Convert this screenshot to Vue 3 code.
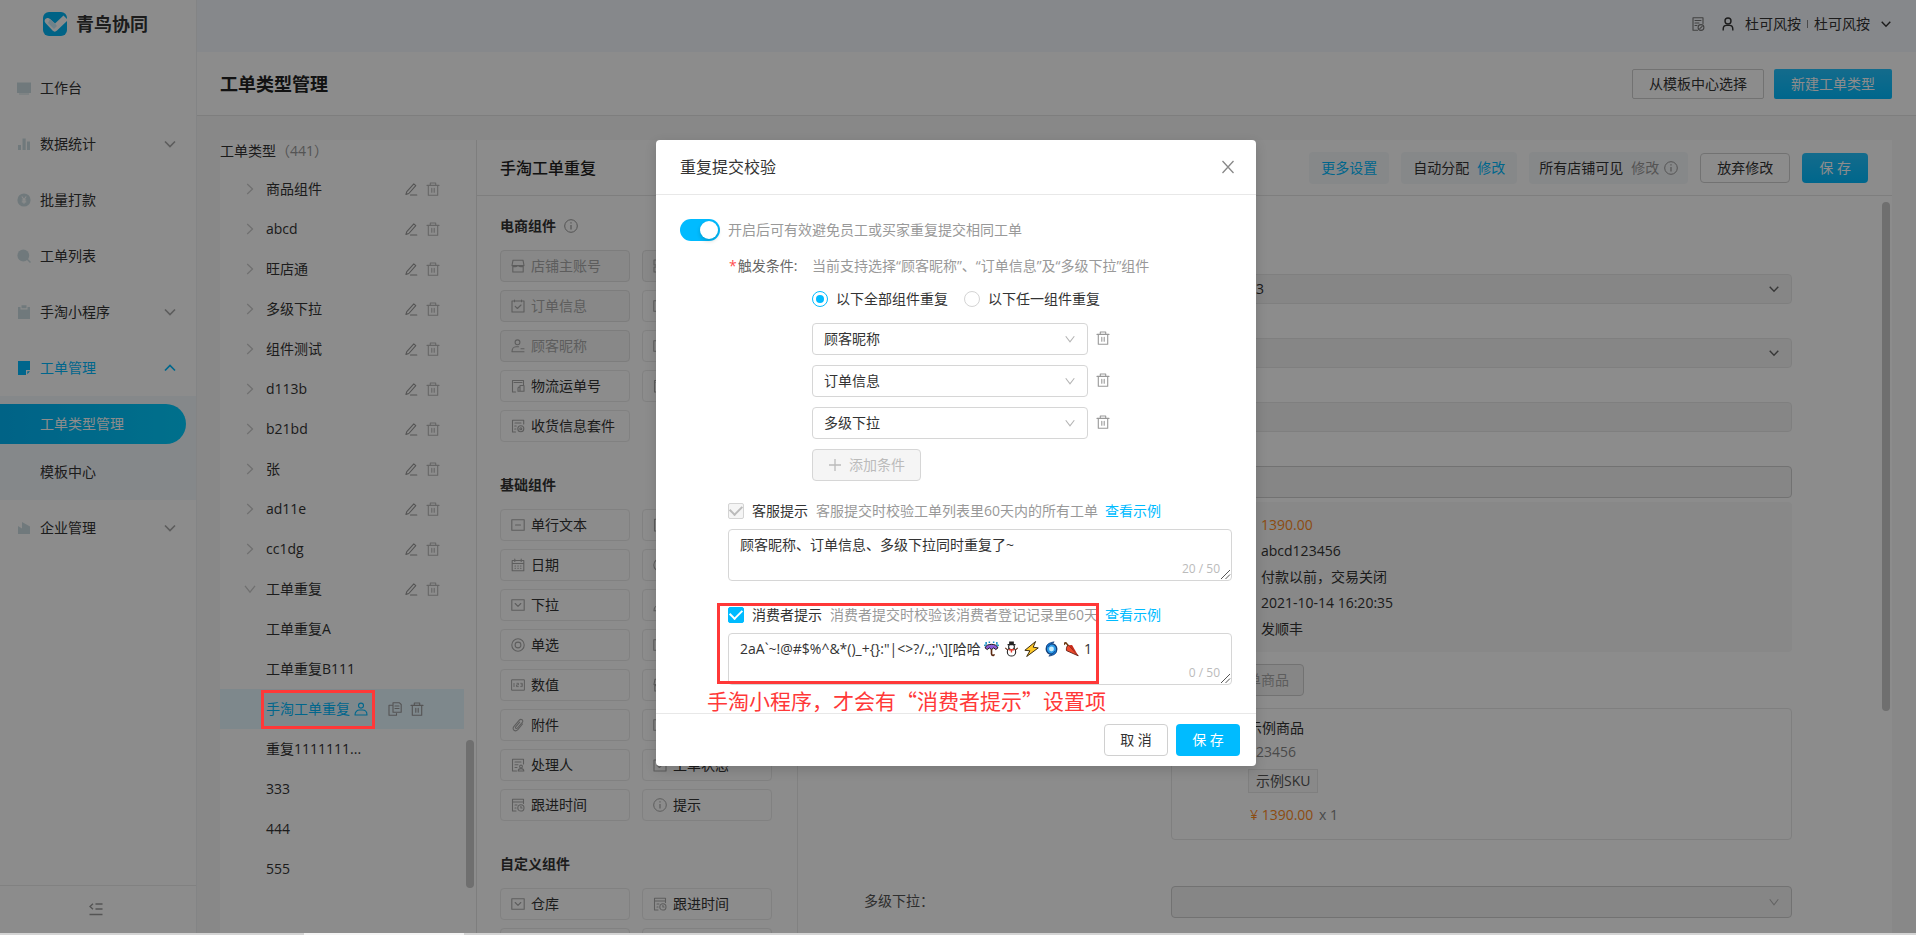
<script setup>
import { h, ref } from 'vue'

const S = 'fill="none" stroke="currentColor" stroke-width="1.1" stroke-linecap="round" stroke-linejoin="round"'
const glyphs = {
  desk: '<path fill="currentColor" d="M0 1.5h14v10.500H0zM2 12.500h10v1H2z"/>',
  chart: '<path fill="currentColor" d="M1 8h3v5H1zM5.500 1.500h3.200V13H5.500zM10 4.500h3V13h-3z"/>',
  yen: '<circle cx="7" cy="7" r="6.600" fill="currentColor"/><path d="M4.800 3.500L7 6.500l2.200-3M4.800 7h4.400M4.800 8.900h4.400M7 6.500v4.300" fill="none" stroke="#fff" stroke-width="1.100"/>',
  search: '<circle cx="6.300" cy="6.500" r="5.900" fill="currentColor"/><path d="M10 10l3.500 3.500" stroke="currentColor" stroke-width="1.500"/>',
  clip: '<path fill="currentColor" d="M1 2h2.500v2.500h7V2H13v12H1zM4.500.200h5V3.300h-5z"/>',
  note: '<path fill="currentColor" d="M1 0h12v9H9v5H1zM10.300 10.200H13L10.300 13.300z"/>',
  factory: '<path fill="currentColor" d="M1 5l4 2.600V1l8 4.500V13H1z"/>',
  down: '<path d="M2 4.500l5 5 5-5" fill="none" stroke="currentColor" stroke-width="1.700"/>',
  up: '<path d="M2 9.500l5-5 5 5" fill="none" stroke="currentColor" stroke-width="1.700"/>',
  thindown: '<path d="M2 3.800l5 6.400 5-6.400" fill="none" stroke="currentColor" stroke-width="1.300"/>',
  right: '<path d="M4.200 2l5.300 5-5.300 5" fill="none" stroke="currentColor" stroke-width="1.300"/>',
  edit: `<path ${S} d="M2.800 9.600L9.800 1.800l2 1.900-7 7.800-2.900.900zM6.500 13h6.300"/>`,
  trash: `<path ${S} d="M1 3.400h12M2.300 3.400v9.800h9.400V3.400M4.300 3V1h5.400v2M5.800 6.300v4M8.200 6.300v4"/>`,
  copy: `<path ${S} d="M5 .8h6.500l1.700 1.700v7.800H5zM4 3.200H1v10h7.500v-1.700M7 4h4M7 6.500h4"/>`,
  person: `<circle cx="7" cy="3.600" r="2.500" ${S}/><path ${S} d="M1 13c0-3.200 2-5 4.500-5h3C11 8 13 9.800 13 13z"/>`,
  user: '<circle cx="7" cy="4" r="3" fill="none" stroke="currentColor" stroke-width="1.400"/><path d="M2.200 13.500V12c0-2.200 1.500-3.600 3.300-3.600h3c1.800 0 3.300 1.400 3.300 3.600v1.500" fill="none" stroke="currentColor" stroke-width="1.400"/>',
  bill: `<path ${S} d="M12 6.500V.8H2v12.500h4.500M4 3.500h6M4 6h4M4 8.500h2"/><circle cx="10" cy="10.500" r="2.900" ${S}/><path ${S} d="M8.800 11.600l2.400-2.200"/>`,
  info: '<circle cx="7" cy="7" r="6.300" fill="none" stroke="currentColor"/><path d="M7 6v4.500M7 3.300v1.300" stroke="currentColor" stroke-width="1.200"/>',
  shop: `<path ${S} d="M2 1.200h10l1 5.300H1zM1.800 7v6h10.400V7M1 6.500c2 1.500 4 1.500 6 0 2 1.500 4 1.500 6 0"/>`,
  order: `<path ${S} d="M1 2h12v11H1zM3.500 1v1.800M10.500 1v1.800M4.200 7.300l2.200 2.200 3.600-3.500"/>`,
  member: `<circle cx="6.500" cy="3.300" r="2.400" ${S}/><path ${S} d="M9 12.800H1c0-3 1.800-5 4-5h2.500M10 9.800h3M9 12.800h4"/>`,
  truck: `<path ${S} d="M4.500 13H1.500V1.500h11V6M3 3.500h8M7 12.200V9.300c0-.8 1-1.600 2-1.600V12.200zM9 6.500h4v5.700H9z"/>`,
  set: `<path ${S} d="M4.500 13H1.500V1.200h11.200V5M4 4h6M3.700 7h1.500M3.700 10h1.200"/><circle cx="9.800" cy="9.800" r="3" ${S}/><circle cx="9.800" cy="9.800" r="1" ${S}/>`,
  text: `<path ${S} d="M.8 1.800h12.400v10.400H.8zM4.500 7h5"/>`,
  date: `<path ${S} d="M1.200 2.500h11.600v10.300H1.200zM1.200 5.500h11.600M3.800 1v2.500M10.200 1v2.500M4 8h.5M6.800 8h.5M9.500 8h.5M4 10.300h.5M6.800 10.300h.5M9.500 10.300h.5"/>`,
  drop: `<path ${S} d="M.8 1.800h12.400v10.400H.8zM4.200 5.500L7 8.300l2.800-2.800"/>`,
  radio: `<circle cx="7" cy="7" r="6.200" ${S}/><circle cx="7" cy="7" r="2.900" ${S}/>`,
  num: '<path d="M.6 1.800h12.800v10.400H.6z" fill="none" stroke="currentColor"/><path d="M3 5v4M5.500 5.300h2v1.600h-2v1.700h2.200M9.300 5.300h2v3.300h-2M9.800 6.900h1.500" fill="none" stroke="currentColor" stroke-width=".9"/>',
  attach: `<path ${S} d="M11.500 6L6.800 11.600c-2.500 2.800-6.200 0-4-2.900l5.500-6.500c1.800-2 4.600.2 3 2.200L6.400 10c-1 1.100-2.600 0-1.700-1.200l4-4.600"/>`,
  handler: `<path ${S} d="M5.500 13H1.500V1.200h11V6M4 4h6M4 6.800h3M4 9.500h2"/><circle cx="10" cy="8.500" r="1.400" ${S}/><path ${S} d="M7.200 13c0-1.600 1-2.400 2.800-2.400s2.800.8 2.800 2.400z"/>`,
  follow: `<path ${S} d="M5 13H1.500V1.200h11V5.500M1.500 4h11M4 7h2M4 10h1"/><circle cx="9.900" cy="9.900" r="3.100" ${S}/><path ${S} d="M9.900 8.300V10h1.200"/>`,
  grid: `<path ${S} d="M1 1h5v5H1zM8 1h5v5H8zM1 8h5v5H1zM8 8h5v5H8z"/>`,
  fold: '<path d="M6.500 2h7M6.500 7h7M.5 12.500h13M4 1.800L1 4.500l3 2.700" fill="none" stroke="currentColor" stroke-width="1.400"/>',
  close: '<path d="M1.500 1l11 12M12.500 1l-11 12" fill="none" stroke="currentColor" stroke-width="1.300"/>',
  plus: '<path d="M7 1v12M1 7h12" stroke="currentColor" stroke-width="1.300"/>',
  grip: '<path d="M4 13l9-9M8.500 13L13 8.500" stroke="currentColor" stroke-width="1" fill="none"/>',
  umbrella: '<path d="M1 6c1-4.500 11-4.500 12 0l-2 1.500L9 6 7 7.500 5 6 3 7.500z" fill="#8a5fd6" stroke="#111" stroke-width=".9"/><path d="M7 7v4.500c0 2 2.500 1.800 2.500.3" fill="none" stroke="#5b2a12" stroke-width="1.500"/><path d="M2 .5v2.600M.3 3.200l1.200 1M12 .5v2.600M13.700 3.200l-1.200 1M5 0v1.500M9 0v1.500" stroke="#138fc4" stroke-width="1.400"/>',
  snowman: '<circle cx="7" cy="9.700" r="3.900" fill="#fff" stroke="#222"/><circle cx="7" cy="5" r="2.700" fill="#fff" stroke="#222"/><path d="M4.800 0h4.400v2.700H4.800zM3.300 2.300h7.400v1.200H3.300z" fill="#222"/><path d="M4.500 7.100h5v1.200H7.600v2H6.300v-2H4.500z" fill="#e23a2e"/><path d="M1.200 6l2.300 2M12.800 6l-2.300 2" stroke="#5b2a12"/>',
  bolt: '<path d="M10.800 0L.8 8.200l4.700.5L2.500 14 13.300 6 8.600 5.300z" fill="#ffc928" stroke="#33240a" stroke-width=".9"/>',
  cyclone: '<circle cx="7" cy="7" r="4.900" fill="#2d9be8" stroke="#123d78" stroke-width="1.300"/><circle cx="7" cy="7" r="2.300" fill="#c9efff"/><path d="M2.300 6C2 3 4.500 1 9.500.4 7 2 5 3 4 5M11.700 8c.3 3-2.200 5-7.200 5.600C7 12 9 11 10 9" fill="#1574cf" stroke="#123d78" stroke-width=".7"/>',
  closed: '<path d="M4 3.200l9.300 10.200L2.300 8.500C2 6 2.500 4.500 4 3.200z" fill="#ef4a2d" stroke="#56150c" stroke-width=".8"/><path d="M4.200 3.500l3.300-.3 5.800 10z" fill="#c82a1a"/><path d="M4 4L2.500 2C1.500.500-.2 1.500.700 3" fill="none" stroke="#6b3a13" stroke-width="1.500"/>'
}
const Icon = (props) => h('svg', { viewBox: '0 0 14 14', 'aria-hidden': 'true', innerHTML: glyphs[props.name] })
Icon.props = ['name']

const menuTop = [
  { icon: 'desk', label: '工作台' },
  { icon: 'chart', label: '数据统计', arrow: 'down' },
  { icon: 'yen', label: '批量打款' },
  { icon: 'search', label: '工单列表' },
  { icon: 'clip', label: '手淘小程序', arrow: 'down' },
  { icon: 'note', label: '工单管理', arrow: 'up', active: true }
]
const groups = ['商品组件', 'abcd', '旺店通', '多级下拉', '组件测试', 'd113b', 'b21bd', '张', 'ad11e', 'cc1dg', '工单重复']
const children = ['工单重复A', '工单重复B111', '手淘工单重复', '重复1111111...', '333', '444', '555']

const sections = [
  { title: '电商组件', info: true, items: [
    { icon: 'shop', label: '店铺主账号', off: true }, { icon: 'grid', off: true },
    { icon: 'order', label: '订单信息', off: true }, { icon: 'text' },
    { icon: 'member', label: '顾客昵称', off: true }, { icon: 'text' },
    { icon: 'truck', label: '物流运单号' }, { icon: 'truck' },
    { icon: 'set', label: '收货信息套件' }
  ] },
  { title: '基础组件', items: [
    { icon: 'text', label: '单行文本' }, { icon: 'handler' },
    { icon: 'date', label: '日期' }, { icon: 'radio' },
    { icon: 'drop', label: '下拉' }, { icon: 'member' },
    { icon: 'radio', label: '单选' }, { icon: 'drop' },
    { icon: 'num', label: '数值' }, { icon: 'shop' },
    { icon: 'attach', label: '附件' }, { icon: 'text' },
    { icon: 'handler', label: '处理人' }, { icon: 'order', label: '工单状态' },
    { icon: 'follow', label: '跟进时间' }, { icon: 'info', label: '提示' }
  ] },
  { title: '自定义组件', items: [
    { icon: 'drop', label: '仓库' }, { icon: 'follow', label: '跟进时间' },
    { icon: 'text' }, { icon: 'text' }
  ] }
]

const conditions = ['顾客昵称', '订单信息', '多级下拉']
const enabled = ref(true)
const mode = ref('all')
const staffOn = ref(true)
const buyerOn = ref(true)
const staffTip = ref('顾客昵称、订单信息、多级下拉同时重复了~')
const buyerTip = ref('2aA`~!@#$%^&*()_+{}:"|<>?/.,;\'\\][哈哈')
const emoji = ['umbrella', 'snowman', 'bolt', 'cyclone', 'closed']
</script>

<template>
  <div class="screen">
    <div class="app">
      <aside class="sidebar">
        <div class="brand">
          <svg class="logo" viewBox="0 0 24 24" aria-hidden="true">
            <rect width="24" height="24" rx="6" fill="#00b4f5" />
            <path d="M2 7.500C3.500 5.500 5.500 5.500 7 7l5 4.500L20.500 3.500 24 7v2L14 18.500c-1.500 1.500-3 1.500-4.500 0L2.500 11C1.500 9.800 1.300 8.700 2 7.500z" fill="#fff" />
            <path d="M7 7l5 4.500 2 2.500-3 3-6-6z" fill="#c9edfb" />
          </svg>
          <strong>青鸟协同</strong>
        </div>
        <nav>
          <a v-for="m in menuTop" :key="m.label" href="#" class="menu" :class="{ on: m.active }">
            <Icon class="i14 menu-icon" :name="m.icon" />
            <span>{{ m.label }}</span>
            <Icon v-if="m.arrow" class="i14 arrow" :name="m.arrow" />
          </a>
          <div class="submenu">
            <a href="#" class="pill">工单类型管理</a>
            <a href="#" class="sub">模板中心</a>
          </div>
          <a href="#" class="menu">
            <Icon class="i14 menu-icon" name="factory" />
            <span>企业管理</span>
            <Icon class="i14 arrow" name="down" />
          </a>
        </nav>
        <button class="fold" aria-label="收起菜单"><Icon class="i14" name="fold" /></button>
      </aside>

      <div class="main">
        <header class="topbar">
          <Icon class="i14 bill" name="bill" />
          <Icon class="i14" name="user" />
          <span class="who">杜可风按</span><i class="bar"></i><span class="who">杜可风按</span>
          <Icon class="i12 who-arrow" name="down" />
        </header>
        <div class="titlebar">
          <h1>工单类型管理</h1>
          <button class="btn square">从模板中心选择</button>
          <button class="btn primary square">新建工单类型</button>
        </div>

        <div class="workspace">
          <section class="tree">
            <div class="tree-title">工单类型<span>（441）</span></div>
            <ul>
              <li v-for="(g, i) in groups" :key="g">
                <Icon class="i14 caret" :name="i === 10 ? 'thindown' : 'right'" />
                <span class="node">{{ g }}</span>
                <span class="tools">
                  <Icon class="i14" name="edit" />
                  <Icon class="i14 pale" name="trash" />
                </span>
              </li>
              <li v-for="c in children" :key="c" class="child" :class="{ picked: c === '手淘工单重复' }">
                <span class="node">{{ c }}</span>
                <template v-if="c === '手淘工单重复'">
                  <Icon class="i14 owner" name="person" />
                  <span class="row-tools">
                    <Icon class="i14" name="copy" />
                    <Icon class="i14" name="trash" />
                  </span>
                  <i class="mark"></i>
                </template>
              </li>
            </ul>
            <i class="thumb"></i>
          </section>

          <section class="parts">
            <h2>手淘工单重复</h2>
            <div class="parts-body">
              <div v-for="s in sections" :key="s.title" class="group">
                <h3>{{ s.title }}<Icon v-if="s.info" class="i14" name="info" /></h3>
                <div class="pair">
                  <button v-for="(p, i) in s.items" :key="i" class="part" :disabled="p.off">
                    <Icon class="i14" :name="p.icon" />
                    <span>{{ p.label }}</span>
                  </button>
                </div>
              </div>
            </div>
          </section>

          <section class="preview">
            <div class="actions">
              <a href="#" class="chip link">更多设置</a>
              <span class="chip">自动分配<a href="#" class="link">修改</a></span>
              <span class="chip wide">所有店铺可见<a href="#" class="dim">修改</a><Icon class="i14" name="info" /></span>
              <button class="btn">放弃修改</button>
              <button class="btn primary save">保 存</button>
            </div>
            <div class="form">
              <div class="field">
                <span class="sel">
                  <select disabled aria-label="工单类型" class="indent"><option>3</option></select>
                  <Icon class="i12 dark" name="down" />
                </span>
              </div>
              <div class="field">
                <span class="sel">
                  <select disabled aria-label="店铺"><option></option></select>
                  <Icon class="i12 dark" name="down" />
                </span>
              </div>
              <div class="field"><input disabled aria-label="顾客昵称" /></div>
              <div class="field last"><input disabled class="strong" aria-label="订单号" /></div>
              <div class="order">
                <p class="orange">1390.00</p>
                <p>abcd123456</p>
                <p>付款以前，交易关闭</p>
                <p>2021-10-14 16:20:35</p>
                <p>发顺丰</p>
              </div>
              <button class="pick" disabled>选择订单商品</button>
              <div class="goods">
                <div>示例商品</div>
                <div class="code">123456</div>
                <span class="sku">示例SKU</span>
                <div class="price"><span class="orange">¥ 1390.00</span> x 1</div>
              </div>
              <label class="label" for="multi">多级下拉：</label>
              <span class="sel multi">
                <select id="multi" disabled class="strong"><option></option></select>
                <Icon class="i12" name="thindown" />
              </span>
            </div>
            <i class="thumb right"></i>
          </section>
        </div>
      </div>

      <div class="mask">
        <div class="dialog" role="dialog" aria-labelledby="dlg-title">
          <header class="dlg-head">
            <span id="dlg-title">重复提交校验</span>
            <button class="x" aria-label="关闭"><Icon class="i14" name="close" /></button>
          </header>
          <div class="dlg-body">
            <label class="toggle">
              <input v-model="enabled" type="checkbox" role="switch" class="switch" />
              <span>开启后可有效避免员工或买家重复提交相同工单</span>
            </label>
            <div class="cond">
              <div class="req"><b>*</b>触发条件:</div>
              <div>
                <div class="hint">当前支持选择“顾客昵称”、“订单信息”及“多级下拉”组件</div>
                <div class="radios">
                  <label><input v-model="mode" type="radio" value="all" name="mode" />以下全部组件重复</label>
                  <label><input v-model="mode" type="radio" value="any" name="mode" />以下任一组件重复</label>
                </div>
                <div v-for="c in conditions" :key="c" class="cond-row">
                  <span class="sel">
                    <select :aria-label="c"><option>{{ c }}</option></select>
                    <Icon class="i12" name="thindown" />
                  </span>
                  <button class="del" :aria-label="'删除' + c"><Icon class="i14" name="trash" /></button>
                </div>
                <button class="add" disabled><Icon class="i14" name="plus" />添加条件</button>
              </div>
            </div>
            <div class="tip">
              <div class="tip-head">
                <div class="lead">
                  <label><input v-model="staffOn" type="checkbox" class="check" disabled />客服提示</label>
                  <span class="desc">客服提交时校验工单列表里60天内的所有工单</span>
                </div>
                <a href="#" class="link">查看示例</a>
              </div>
              <div class="area">
                <textarea v-model="staffTip" aria-label="客服提示内容"></textarea>
                <span class="count">20 / 50</span>
                <Icon class="i14 grip" name="grip" />
              </div>
            </div>
            <div class="tip">
              <div class="tip-head">
                <div class="lead">
                  <label><input v-model="buyerOn" type="checkbox" class="check" />消费者提示</label>
                  <span class="desc">消费者提交时校验该消费者登记记录里60天</span>
                </div>
                <a href="#" class="link">查看示例</a>
              </div>
              <div class="area">
                <div class="line">
                  <textarea v-model="buyerTip" class="short" aria-label="消费者提示内容"></textarea>
                  <span class="emoji"><Icon v-for="e in emoji" :key="e" class="glyph" :name="e" />1</span>
                </div>
                <span class="count">0 / 50</span>
                <Icon class="i14 grip" name="grip" />
              </div>
            </div>
            <i class="frame"></i>
            <div class="remark">手淘小程序，才会有“消费者提示”设置项</div>
          </div>
          <footer class="dlg-foot">
            <button class="btn tall">取 消</button>
            <button class="btn tall flat">保 存</button>
          </footer>
        </div>
      </div>
    </div>
    <div class="hscroll"><i></i></div>
  </div>
</template>

<style>
body { margin: 0; overflow: hidden; }
</style>

<style scoped>
* { box-sizing: border-box; }
.screen {
  display: flex; flex-direction: column; height: 100vh;
  font: 14px/22px "Open Sans", "Noto Sans CJK SC", sans-serif; color: #333;
}
button, input, select, textarea { font: inherit; color: inherit; margin: 0; }
button { cursor: pointer; }
a { color: inherit; text-decoration: none; }
h1, h2, h3, p, ul { margin: 0; padding: 0; }
li { list-style: none; }
.i14 { width: 14px; height: 14px; flex: none; }
.i12 { width: 12px; height: 12px; flex: none; }
.link { color: #00bbff; }
.orange { color: #ff8a1e; }

.app { position: relative; display: flex; flex: 1; min-height: 0; background: #f7f7f7; }
.hscroll { height: 2px; background: #d4d4d4; flex: none; }
.hscroll i { display: block; width: 160px; height: 2px; margin-left: 304px; background: #f4f4f4; }

.sidebar { display: flex; flex-direction: column; width: 197px; flex: none; background: #fff; border-right: 1px solid #eef0f2; }
.brand { display: flex; align-items: center; justify-content: center; gap: 9px; height: 60px; padding: 0 5px 12px 0; }
.logo { width: 24px; height: 24px; }
.brand strong { font-size: 18px; }
nav { flex: 1; }
.menu { display: flex; align-items: center; height: 56px; padding: 0 19px 0 17px; }
.menu span { margin-left: 9px; flex: 1; }
.menu-icon { color: #cddde2; }
.arrow { color: #aaa; }
.on, .on .menu-icon, .on .arrow { color: #00bbff; }
.submenu { padding: 8px 0 0; background: #f3f7fc; }
.pill, .sub { display: flex; align-items: center; padding-left: 40px; }
.pill { height: 40px; margin-right: 10px; border-radius: 0 20px 20px 0; color: #fff; background: linear-gradient(90deg, #00b4f5, #00ccff); }
.sub { height: 56px; }
.fold { display: flex; align-items: center; justify-content: center; height: 48px; padding: 0 4px 2px 0; border: 0; border-top: 1px solid #ececec; background: none; color: #999; }

.main { display: flex; flex-direction: column; flex: 1; min-width: 0; }
.topbar { display: flex; align-items: center; justify-content: flex-end; height: 52px; padding: 0 24px 4px 0; background: #f5f8fd; flex: none; }
.bill { margin-right: 16px; color: #777; }
.who { margin-left: 10px; }
.bar { width: 1px; height: 8px; margin: 0 -4px 0 6px; background: #888; }
.who-arrow { margin-left: 10px; }
.titlebar { display: flex; align-items: center; gap: 10px; height: 64px; padding: 0 24px 0 23px; background: #fff; border-bottom: 1px solid #e6e6e6; flex: none; }
h1 { flex: 1; font-size: 18px; line-height: 26px; font-weight: 700; color: #222; }
.btn { height: 30px; padding: 0 16px; border: 1px solid #d0d0d0; border-radius: 4px; background: #fff; line-height: 20px; white-space: nowrap; }
.btn.square { border-radius: 2px; }
.btn.primary { border: 0; padding: 0 17px; color: #fff; background: linear-gradient(#25c4ff, #00bbff); }
.workspace { display: flex; flex: 1; min-height: 0; padding: 24px 24px 0 23px; }

.tree { position: relative; width: 256px; flex: none; background: #fff; overflow: hidden; }
.tree-title { margin-bottom: 7px; }
.tree-title span { color: #999; }
.tree li { position: relative; display: flex; align-items: center; height: 40px; margin-right: 12px; padding-left: 23px; }
.tree li.child { padding-left: 46px; }
.caret { margin-right: 9px; color: #ccc; }
.tools { display: flex; gap: 8px; margin-left: auto; margin-right: 24px; color: #999; }
.pale { color: #bbb; }
.tree li.picked { background: #e6f7ff; color: #00bbff; }
.owner { margin-left: 4px; }
.row-tools { display: flex; gap: 8px; margin-left: 20px; color: #999; }
.mark { position: absolute; left: 41px; top: 1px; width: 114px; height: 39px; border: 3px solid #ff3838; z-index: 20; }
.thumb { position: absolute; right: 2px; top: 600px; width: 8px; height: 148px; border-radius: 4px; background: #cacaca; }

.parts { width: 322px; flex: none; background: #fff; border-left: 1px solid #e6e6e6; border-right: 1px solid #ececec; overflow: hidden; }
h2 { height: 56px; padding-left: 23px; font-size: 16px; line-height: 56px; font-weight: 500; color: #222; border-bottom: 1px solid #e6e6e6; }
.parts-body { padding: 19px 24px 0 23px; }
.group { margin-bottom: 32px; }
h3 { display: flex; align-items: center; gap: 8px; height: 22px; margin-bottom: 13px; font-size: 14px; font-weight: 700; }
h3 svg { color: #999; }
.pair { display: grid; grid-template-columns: 130px 130px; gap: 8px 12px; }
.part { display: flex; align-items: center; gap: 6px; height: 32px; padding: 0 10px; border: 1px solid #ebebeb; border-radius: 4px; background: #fff; white-space: nowrap; }
.part svg { color: #aaa; }
.part:disabled { background: #f7f7f7; color: #aaa; border-color: #e4e4e4; }

.preview { position: relative; flex: 1; min-width: 0; background: #fff; overflow: hidden; }
.actions { display: flex; align-items: center; justify-content: flex-end; gap: 12px; height: 56px; padding-right: 24px; border-bottom: 1px solid #e6e6e6; }
.chip { display: flex; align-items: center; gap: 8px; height: 32px; padding: 0 12px; border-radius: 4px; background: #f5f7fa; white-space: nowrap; }
.chip.wide { padding: 0 10px; }
.chip svg { color: #999; margin-left: -3px; }
.dim { color: #999; }
.form { padding: 78px 100px 0 373px; }
.field { height: 64px; }
.field.last { height: 36px; }
.sel { position: relative; display: block; }
.sel svg { position: absolute; right: 12px; top: 50%; margin-top: -6px; color: #b5b5b5; pointer-events: none; }
.sel svg.dark { color: #666; }
select { appearance: none; width: 100%; height: 32px; padding: 0 11px; border: 1px solid #d6d6d6; border-radius: 4px; background: #fff; opacity: 1; color: #333; }
.form select, .form input { display: block; width: 100%; height: 30px; border: 1px solid #e8e8e8; border-radius: 4px; background: #f5f5f5; }
.form select.indent { padding-left: 84px; }
.form .strong { height: 32px; border-color: #cfcfcf; }
.order { height: 150px; padding: 10px 90px 0; border-radius: 4px; background: #f7f7f7; }
.order p { height: 26px; line-height: 26px; }
.pick { display: block; height: 32px; width: 133px; margin: 12px 0; padding: 0 14px; border: 1px solid #cfcfcf; border-radius: 4px; background: #f5f5f5; color: #aaa; text-align: right; }
.goods { height: 132px; padding: 7px 76px; border: 1px solid #e8e8e8; border-radius: 4px; }
.goods > div { line-height: 24px; }
.goods .code, .goods .price { color: #888; }
.sku { display: inline-block; margin: 5px 0 10px; padding: 0 7px; border: 1px solid #e8e8e8; background: #fafafa; line-height: 22px; color: #555; }
.goods .price .orange { margin: 0 2px; }
.form .label { position: relative; float: left; width: 120px; margin: 50px 0 0 -307px; color: #555; }
.multi { margin-top: 46px; }
.thumb.right { top: 62px; height: 509px; }

.mask { position: absolute; inset: 0; z-index: 10; display: flex; align-items: flex-start; justify-content: center; padding: 140px 4px 0 0; background: rgba(0, 0, 0, 0.45); }
.dialog { width: 600px; border-radius: 4px; background: #fff; box-shadow: 0 4px 12px rgba(0, 0, 0, 0.15); }
.dlg-head { display: flex; align-items: center; justify-content: space-between; height: 55px; padding: 0 20px 0 24px; border-bottom: 1px solid #e8e8e8; font-size: 16px; }
.x { display: flex; padding: 1px; border: 0; background: none; color: #888; }
.dlg-body { position: relative; height: 518px; padding: 23px 24px 0; overflow: hidden; }
.toggle { display: flex; align-items: center; gap: 8px; height: 24px; color: #999; }
.switch { appearance: none; position: relative; width: 40px; height: 22px; border-radius: 11px; background: #ccc; }
.switch::after { content: ''; position: absolute; left: 2px; top: 2px; width: 18px; height: 18px; border-radius: 9px; background: #fff; box-shadow: 0 2px 4px rgba(0, 35, 11, 0.2); }
.switch:checked { background: #00bbff; }
.switch:checked::after { left: 20px; }
.cond { display: grid; grid-template-columns: 132px 1fr; margin-top: 13px; }
.req { padding-left: 49px; color: #666; }
.req b { margin-right: 1px; font-weight: 400; color: #ff4d4f; }
.hint { color: #999; }
.radios { display: flex; gap: 16px; margin: 11px 0 13px; }
.radios label, .tip-head label { display: flex; align-items: center; gap: 8px; }
.radios input { appearance: none; display: grid; place-items: center; width: 16px; height: 16px; border: 1px solid #d4d4d4; border-radius: 8px; background: #fff; }
.radios input:checked { border-color: #00bbff; }
.radios input:checked::after { content: ''; width: 8px; height: 8px; border-radius: 4px; background: #00bbff; }
.cond-row { display: flex; align-items: center; gap: 8px; margin-bottom: 10px; }
.cond-row .sel { width: 276px; }
.del { display: flex; padding: 0 0 2px; border: 0; background: none; color: #999; }
.add { display: flex; align-items: center; gap: 7px; height: 32px; padding: 0 15px; border: 1px solid #d6d6d6; border-radius: 4px; background: #f5f5f5; color: #bbb; }
.tip { margin: 19px 0 0 48px; height: 85px; }
.tip-head { display: flex; gap: 6px; height: 22px; margin-bottom: 7px; white-space: nowrap; }
.lead { display: flex; gap: 8px; width: 371px; }
.desc { color: #999; }
.check { appearance: none; display: grid; place-items: center; width: 16px; height: 16px; border: 1px solid #d4d4d4; border-radius: 2px; background: #f5f5f5; color: #bbb; }
.check:checked::after { content: ''; width: 10px; height: 6px; margin-top: -4px; border: solid currentColor; border-width: 0 0 2px 2px; transform: rotate(-45deg); }
.check:enabled:checked { border-color: #00bbff; background: #00bbff; color: #fff; }
.area { position: relative; display: flex; flex-direction: column; height: 52px; border: 1px solid #d6d6d6; border-radius: 4px; }
textarea { display: block; width: 100%; height: 30px; padding: 4px 11px; border: 0; background: none; resize: none; overflow: hidden; outline: none; }
.line { display: flex; }
textarea.short { width: 255px; padding-right: 0; white-space: nowrap; }
.count { align-self: flex-end; margin-right: 11px; font-size: 12px; line-height: 18px; color: #bbb; }
.grip { position: absolute; right: 0; bottom: 0; color: #555; }
.emoji { display: flex; align-items: center; gap: 5px; height: 30px; }
.glyph { width: 15px; height: 16px; flex: none; }
.frame { position: absolute; left: 61px; top: 408px; width: 382px; height: 81px; border: 3px solid #ff3838; }
.remark { position: absolute; left: 51px; top: 492px; font-size: 21px; line-height: 26px; color: #ff3838; font-family: "Noto Sans CJK SC", sans-serif; white-space: nowrap; }
.dlg-foot { display: flex; justify-content: flex-end; gap: 8px; padding: 10px 16px; border-top: 1px solid #e8e8e8; }
.btn.tall { height: 32px; width: 64px; padding: 0; }
.btn.flat { border: 0; color: #fff; background: #00bbff; }
</style>
